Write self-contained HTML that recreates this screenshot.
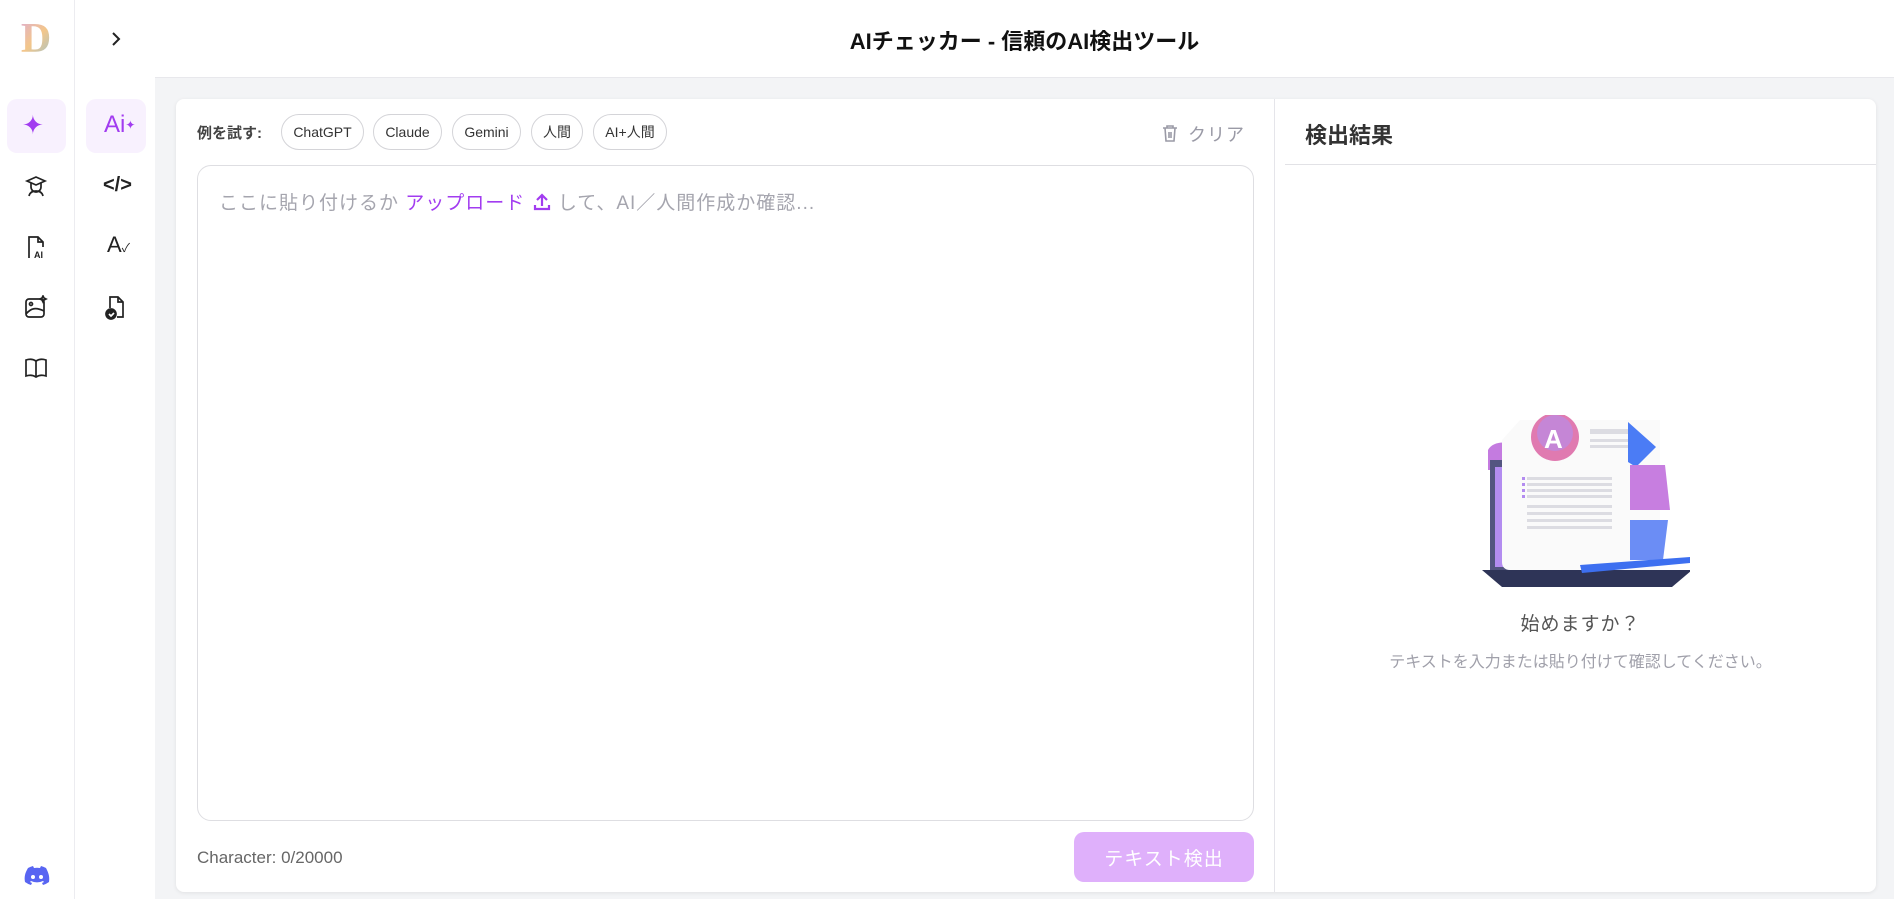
<!DOCTYPE html>
<html><head><meta charset="utf-8"><style>
*{box-sizing:border-box;margin:0;padding:0}
body{width:1894px;height:899px;overflow:hidden;background:#fff;font-family:"Liberation Sans","Noto Sans CJK JP",sans-serif;position:relative;color:#222}
.abs{position:absolute}
.sb1{left:0;top:0;width:75px;height:899px;border-right:1px solid #ececf0;background:#fff}
.sb2{left:75px;top:0;width:80px;height:899px;background:#fff}
.main{left:155px;top:77px;width:1739px;height:822px;background:#f3f4f6;border-top:1px solid #e8e8ec}
.card{left:176px;top:99px;width:1700px;height:793px;background:#fff;border-radius:8px;box-shadow:0 1px 4px rgba(0,0,0,.08)}
.act{background:#f8f1fe;border-radius:10px}
.chip{top:114px;height:36px;border:1px solid #d4d4d8;border-radius:18px;font-size:14px;color:#333;display:flex;align-items:center;justify-content:center}
svg{display:block}
</style></head><body>
<div class="abs sb1"></div>
<div class="abs sb2"></div>
<div class="abs" style="left:12px;top:15px;width:48px;height:48px;border-radius:50%;background:#fafafa;font-family:'Liberation Serif',serif;font-size:42px;line-height:48px;text-align:center;font-weight:bold;background-image:linear-gradient(135deg,#d8a6e8,#f3c68a 50%,#7fc3e6);-webkit-background-clip:text;color:transparent">D</div>
<svg class="abs" style="left:108px;top:30px" width="16" height="18" viewBox="0 0 16 18"><path d="M5 3l6 6-6 6" stroke="#222" stroke-width="2" fill="none"/></svg>
<div class="abs" style="left:155px;right:0;top:24px;text-align:center;font-size:22px;font-weight:bold;color:#111">AIチェッカー - 信頼のAI検出ツール</div>
<div class="abs main"></div>
<div class="abs act" style="left:7px;top:99px;width:59px;height:54px"></div>
<div class="abs" style="left:22px;top:112px;font-size:26px;color:#a23cf0;line-height:26px">✦</div>
<svg class="abs" style="left:24px;top:174px" width="24" height="24" viewBox="0 0 24 24" fill="none" stroke="#222" stroke-width="1.7"><path d="M3 7l9-4 9 4-9 4z"/><path d="M7 9v4a5 5 0 0010 0V9"/><path d="M5 22c1-4 4-5 7-5s6 1 7 5"/></svg>
<svg class="abs" style="left:25px;top:234px" width="22" height="26" viewBox="0 0 22 26" fill="none" stroke="#222" stroke-width="1.7"><path d="M4 24V3h9l5 5v5"/><path d="M13 3v5h5"/><text x="9" y="24" font-size="9" font-weight="bold" fill="#222" stroke="none" font-family="Liberation Sans">AI</text></svg>
<svg class="abs" style="left:24px;top:295px" width="24" height="24" viewBox="0 0 24 24" fill="none" stroke="#222" stroke-width="1.7"><rect x="2" y="4" width="18" height="18" rx="3"/><circle cx="7" cy="9" r="1.5"/><path d="M2 19c5-6 10-7 18-3"/><path d="M19 1l1 2 2 1-2 1-1 2-1-2-2-1 2-1z"/></svg>
<svg class="abs" style="left:24px;top:356px" width="24" height="24" viewBox="0 0 24 24" fill="none" stroke="#222" stroke-width="1.7"><path d="M12 5C9 3 5 3 2 4v16c3-1 7-1 10 1 3-2 7-2 10-1V4c-3-1-7-1-10 1z"/><path d="M12 5v16"/></svg>
<svg class="abs" style="left:24px;top:866px" width="26" height="20" viewBox="0 0 26 20"><path d="M22 2a20 20 0 00-5-2l-1 2a18 18 0 00-6 0L9 0a20 20 0 00-5 2C1 7 0 11 1 16a20 20 0 006 3l1-2-2-1 1-1a14 14 0 0012 0l1 1-2 1 1 2a20 20 0 006-3c1-6-1-10-3-14z" fill="#5865f2"/><circle cx="9" cy="11" r="2" fill="#fff"/><circle cx="17" cy="11" r="2" fill="#fff"/></svg>
<div class="abs act" style="left:86px;top:99px;width:60px;height:54px"></div>
<div class="abs" style="left:104px;top:112px;font-size:24px;color:#a23cf0;line-height:26px">Ai<span style="font-size:12px;vertical-align:top">✦</span></div>
<div class="abs" style="left:103px;top:174px;font-size:20px;color:#222;font-weight:bold">&lt;/&gt;</div>
<div class="abs" style="left:107px;top:232px;font-size:22px;color:#222">A<span style="font-size:12px">✓</span></div>
<svg class="abs" style="left:104px;top:294px" width="22" height="26" viewBox="0 0 22 26" fill="none" stroke="#222" stroke-width="1.7"><path d="M6 14V3h8l5 5v15h-6"/><path d="M14 3v5h5"/><circle cx="7" cy="20" r="5" fill="#222"/><path d="M5 20l2 2 3-3" stroke="#fff"/></svg>
<div class="abs card"></div>
<div class="abs" style="left:1274px;top:99px;width:1px;height:793px;background:#e5e5ea"></div>
<div class="abs" style="left:197px;top:122px;font-size:15px;font-weight:bold;color:#444">例を試す:</div>
<div class="abs chip" style="left:281px;width:83px">ChatGPT</div>
<div class="abs chip" style="left:373px;width:69px">Claude</div>
<div class="abs chip" style="left:452px;width:69px">Gemini</div>
<div class="abs chip" style="left:531px;width:52px">人間</div>
<div class="abs chip" style="left:593px;width:74px">AI+人間</div>
<svg class="abs" style="left:1162px;top:124px" width="16" height="18" viewBox="0 0 16 18" fill="none" stroke="#9a9aa6" stroke-width="1.6"><path d="M1 4h14M5 4V2h6v2M3 4l1 13h8l1-13M7 8v6M9 8v6"/></svg>
<div class="abs" style="left:1188px;top:121px;font-size:18px;color:#9a9aa6;letter-spacing:1px">クリア</div>
<div class="abs" style="left:197px;top:165px;width:1057px;height:656px;border:1px solid #dedee2;border-radius:14px"></div>
<div class="abs" style="left:219px;top:188px;font-size:19px;color:#a5a5ae;letter-spacing:1px;display:flex;align-items:center">ここに貼り付けるか&nbsp;<span style="color:#a23cf0">アップロード</span>&nbsp;<svg width="20" height="20" viewBox="0 0 20 20" fill="none" stroke="#a23cf0" stroke-width="2.2"><path d="M10 14V3M5 8l5-5 5 5M3 13v4h14v-4"/></svg>&nbsp;して、AI／人間作成か確認...</div>
<div class="abs" style="left:197px;top:848px;font-size:17px;color:#666">Character: 0/20000</div>
<div class="abs" style="left:1074px;top:832px;width:180px;height:50px;background:#dfb0fb;border-radius:10px;color:#fff;font-size:19px;display:flex;align-items:center;justify-content:center;letter-spacing:1px">テキスト検出</div>
<div class="abs" style="left:1305px;top:118px;font-size:22px;font-weight:bold;color:#333">検出結果</div>
<div class="abs" style="left:1285px;top:164px;width:591px;height:1px;background:#e2e2e6"></div>
<svg class="abs" style="left:1480px;top:415px" width="210" height="175" viewBox="0 0 210 175">
<path d="M8 35c5-10 25-10 30 0v20H8z" fill="#c47be0"/>
<path d="M10 45h160v115H10z" fill="#535580"/>
<path d="M15 52h150v100H15z" fill="#b38cf0"/>
<path d="M2 155h210l-20 17H22z" fill="#2e3457"/>
<path d="M40 5h140v150H30c-5 0-8-3-8-8V25z" fill="#fafafa"/>
<circle cx="75" cy="22" r="24" fill="#e07ab0"/><circle cx="75" cy="18" r="18" fill="#b28df0" opacity=".6"/>
<text x="64" y="33" font-size="26" font-weight="bold" fill="#fff" font-family="Liberation Sans">A</text>
<rect x="110" y="14" width="40" height="5" fill="#dcdce2"/><rect x="110" y="24" width="40" height="3" fill="#dcdce2"/><rect x="110" y="30" width="40" height="3" fill="#dcdce2"/>
<g fill="#dcdce2"><rect x="47" y="62" width="85" height="3"/><rect x="47" y="68" width="85" height="3"/><rect x="47" y="74" width="85" height="3"/><rect x="47" y="80" width="85" height="3"/><rect x="47" y="90" width="85" height="3"/><rect x="47" y="97" width="85" height="3"/><rect x="47" y="104" width="85" height="3"/><rect x="47" y="111" width="85" height="3"/></g>
<g fill="#b38cf0"><rect x="42" y="62" width="3" height="3"/><rect x="42" y="68" width="3" height="3"/><rect x="42" y="74" width="3" height="3"/><rect x="42" y="80" width="3" height="3"/></g>
<path d="M148 7l28 25-20 20-8-5z" fill="#4b7cf5"/>
<path d="M150 50h35l5 45h-40z" fill="#c77ee0"/>
<path d="M150 105h38l-5 40h-33z" fill="#6b8df5"/>
<path d="M100 150l110-8v6l-108 10z" fill="#3d6ff0"/>
</svg>
<div class="abs" style="left:1285px;width:591px;top:609px;text-align:center;font-size:19px;color:#555;letter-spacing:1px">始めますか？</div>
<div class="abs" style="left:1285px;width:591px;top:648px;text-align:center;font-size:16px;color:#a0a0aa">テキストを入力または貼り付けて確認してください。</div>
</body></html>
